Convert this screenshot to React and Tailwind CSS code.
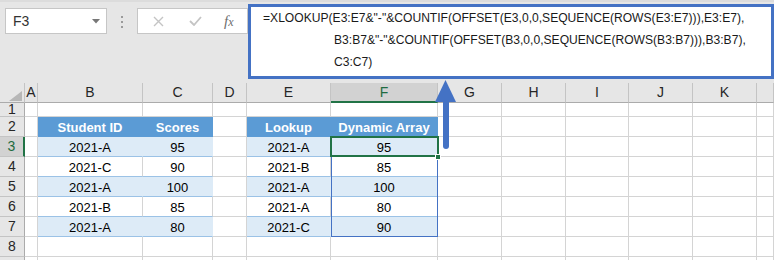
const COLS = ["A", "B", "C", "D", "E", "F", "G", "H", "I", "J", "K", "L"]

const DATA = {
  2: { B: "Student ID", C: "Scores", E: "Lookup", F: "Dynamic Array" },
  3: { B: "2021-A", C: "95", E: "2021-A", F: "95" },
  4: { B: "2021-C", C: "90", E: "2021-B", F: "85" },
  5: { B: "2021-A", C: "100", E: "2021-A", F: "100" },
  6: { B: "2021-B", C: "85", E: "2021-A", F: "80" },
  7: { B: "2021-A", C: "80", E: "2021-C", F: "90" },
}

const TABLE_COLS = ["B", "C", "E", "F"]

const hdrCell = "bg-[#5b9bd5] border-r-[#5b9bd5] border-b-[#5b9bd5] font-bold text-white"
const bandCell = "bg-[#ddebf7] border-r-[#ddebf7] border-b-[#9bc2e6] text-black"
const plainCell = "bg-white border-r-[#d4d4d4] border-b-[#9bc2e6] text-black"
const emptyCell = "bg-white border-r-[#d4d4d4] border-b-[#d4d4d4]"

function cellStyle(row, col) {
  if (row >= 2 && row <= 7 && TABLE_COLS.includes(col)) {
    if (row === 2) return hdrCell
    if (row % 2 === 1) return bandCell
    return plainCell
  }
  return emptyCell
}

function FormulaBar() {
  return (
    <div className="flex h-[83px] items-start border-t-2 border-[#dcdcdc] bg-[#e6e6e6]">
      {/* Name box */}
      <div className="ml-[5px] mt-[6px] flex h-[26px] w-[102px] items-center justify-between border border-[#c6c6c6] bg-white pl-[7px] pr-[6px]">
        <span className="text-[14px] text-[#333]">F3</span>
        <svg width="8" height="5" viewBox="0 0 8 5">
          <path d="M0 0h8L4 4.5z" fill="#777" />
        </svg>
      </div>

      {/* separator dots */}
      <div className="ml-[14px] mt-[14px] flex flex-col gap-[3px]">
        <span className="h-[2px] w-[2px] bg-[#9a9a9a]" />
        <span className="h-[2px] w-[2px] bg-[#9a9a9a]" />
        <span className="h-[2px] w-[2px] bg-[#9a9a9a]" />
      </div>

      {/* cancel / enter / fx */}
      <div className="ml-[14px] mt-[6px] flex h-[26px] w-[111px] items-center border border-[#c6c6c6] bg-white">
        <svg className="ml-[15px]" width="11" height="11" viewBox="0 0 11 11">
          <path d="M1 1l9 9M10 1l-9 9" stroke="#c4c4c4" strokeWidth="1.4" />
        </svg>
        <svg className="ml-[25px]" width="13" height="10" viewBox="0 0 13 10">
          <path d="M1 5l4 4 7-8" stroke="#c4c4c4" strokeWidth="1.8" fill="none" />
        </svg>
        <span className="ml-[22px] font-['Liberation_Serif',serif] text-[15px] italic leading-none text-[#6e6e6e]">
          f<span className="text-[12px]">x</span>
        </span>
      </div>

      {/* expanded formula */}
      <div className="mt-[2px] h-[75px] flex-1 border-[3px] border-[#4472c4] bg-white font-['Liberation_Sans',Arial,sans-serif] text-[12.1px] leading-[22px] text-[#1a1a1a]">
        <div className="whitespace-pre pl-[12px]">{'=XLOOKUP(E3:E7&"-"&COUNTIF(OFFSET(E3,0,0,SEQUENCE(ROWS(E3:E7))),E3:E7),'}</div>
        <div className="whitespace-pre pl-[83px]">{'B3:B7&"-"&COUNTIF(OFFSET(B3,0,0,SEQUENCE(ROWS(B3:B7))),B3:B7),'}</div>
        <div className="whitespace-pre pl-[83px]">{"C3:C7)"}</div>
      </div>
    </div>
  )
}

function Sheet() {
  const rows = [1, 2, 3, 4, 5, 6, 7, 8, 9]

  return (
    <div className="grid grid-cols-[25px_13px_105px_70px_34px_84px_107px_64px_64px_63px_64px_64px_1fr] grid-rows-[20px_14px_repeat(7,20px)_20px] text-[13px]">
      {/* corner */}
      <div className="relative border-b border-r border-b-[#ababab] border-r-[#c4c4c4] bg-[#e6e6e6]">
        <svg className="absolute left-0 top-0" width="25" height="20" viewBox="0 0 25 20">
          <path d="M9 18h13V8z" fill="#b7b7b7" />
        </svg>
      </div>

      {/* column headers (L is cut off at the window edge) */}
      {COLS.map((c) =>
        c === "F" ? (
          <div
            key={c}
            className="flex items-center justify-center border-b-2 border-r border-b-[#217346] border-r-[#c4c4c4] bg-[#d2d2d2] pt-[1px] text-[14px] text-[#1f6b40]"
          >
            {c}
          </div>
        ) : (
          <div
            key={c}
            className="flex items-center justify-center border-b border-r border-b-[#ababab] border-r-[#c4c4c4] bg-[#e6e6e6] text-[14px] text-[#262626]"
          >
            {c === "L" ? "" : c}
          </div>
        )
      )}

      {rows.map((r) => (
        <Row key={r} r={r} />
      ))}
    </div>
  )
}

function Row({ r }) {
  const data = DATA[r] || {}
  return (
    <>
      {r === 3 ? (
        <div className="flex items-center justify-center border-b border-r-2 border-b-[#c4c4c4] border-r-[#217346] bg-[#d2d2d2] text-[14px] text-[#1f6b40]">
          {r}
        </div>
      ) : (
        <div className="flex items-center justify-center border-b border-r border-b-[#c4c4c4] border-r-[#ababab] bg-[#e6e6e6] text-[14px] text-[#262626]">
          {r === 9 ? "" : r}
        </div>
      )}
      {COLS.map((c) => (
        <div
          key={c}
          className={`relative flex items-center justify-center border-b border-r pt-[2px] font-['Liberation_Sans',Arial,sans-serif] ${cellStyle(r, c)}`}
        >
          {data[c]}
          {r === 3 && c === "F" && (
            <>
              {/* spill range border */}
              <div className="pointer-events-none absolute left-0 top-0 z-10 h-[100px] w-[107px] border border-t-0 border-[#4472c4]" />
              {/* active cell */}
              <div className="pointer-events-none absolute -left-[1px] -top-[1px] z-20 h-[21px] w-[109px] border-2 border-[#217346]" />
              <div className="pointer-events-none absolute left-[104px] top-[17px] z-30 h-[6px] w-[6px] border border-white bg-[#217346]" />
            </>
          )}
        </div>
      ))}
    </>
  )
}

function Arrow() {
  return (
    <svg className="pointer-events-none absolute left-[435px] top-[80px] z-40" width="21" height="69" viewBox="0 0 21 69">
      <path d="M10.5 0L21 22H0z" fill="#4472c4" />
      <path d="M8 20h6v46a3 3 0 0 1-6 0z" fill="#4472c4" />
    </svg>
  )
}

export default function App() {
  return (
    <div className="relative h-[260px] w-[774px] overflow-hidden bg-white font-['Liberation_Sans',Arial,sans-serif]">
      <FormulaBar />
      <Sheet />
      <Arrow />
    </div>
  )
}
